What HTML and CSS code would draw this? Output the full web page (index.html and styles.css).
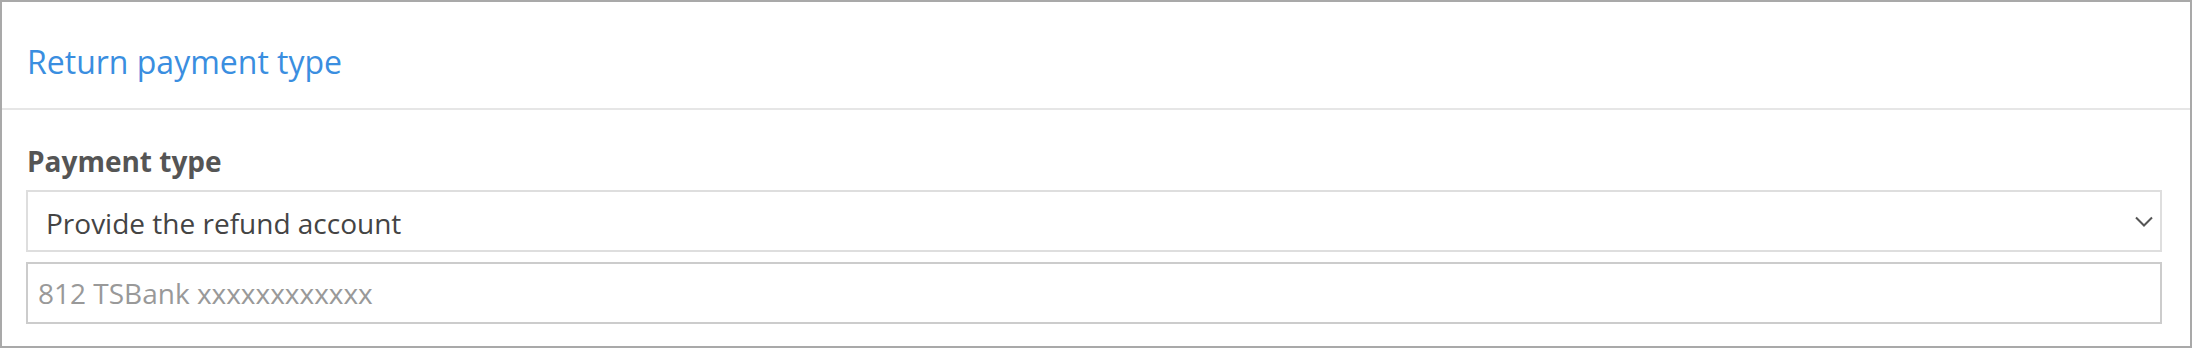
FILE: index.html
```html
<!DOCTYPE html>
<html lang="en">
<head>
<meta charset="utf-8">
<title>Return payment type</title>
<link rel="stylesheet" href="styles.css">
</head>
<body>
<section class="panel">
  <header class="panel-header">
    <h2 class="panel-title">Return payment type</h2>
  </header>
  <div class="panel-body">
    <div class="field-label">Payment type</div>
    <div class="select">
      <span class="select-value">Provide the refund account</span>
      <svg class="chevron" width="18" height="11" viewBox="0 0 18 11" aria-hidden="true">
        <polyline points="1,1.5 9,9.5 17,1.5" fill="none" stroke="#555" stroke-width="2"/>
      </svg>
    </div>
    <div class="input">
      <span class="placeholder">812 TSBank xxxxxxxxxxxx</span>
    </div>
  </div>
</section>
</body>
</html>
```

FILE: styles.css
```css
html, body {
  margin: 0;
  padding: 0;
  background: #fff;
}

body {
  font-family: "Open Sans", "Liberation Sans", sans-serif;
}

.panel {
  box-sizing: border-box;
  width: 2192px;
  height: 348px;
  border: 2px solid #a9a9a9;
  background: #fff;
}

.panel-header {
  box-sizing: border-box;
  height: 108px;
  padding: 38px 0 0 25px;
  border-bottom: 2px solid #e6e6e6;
}

.panel-title {
  margin: 0;
  font-size: 32px;
  line-height: 44px;
  font-weight: 400;
  color: #3a8ee0;
}

.panel-body {
  padding: 32px 28px 0 24px;
  display: flex;
  flex-direction: column;
}

.field-label {
  font-size: 28px;
  font-weight: 700;
  line-height: 38px;
  color: #555;
  margin-bottom: 10px;
  padding-left: 1px;
}

.select,
.input {
  box-sizing: border-box;
  height: 62px;
  display: flex;
  align-items: center;
  font-size: 28px;
  line-height: 38px;
}

.select {
  border: 2px solid #dedede;
  padding: 4px 7px 0 18px;
  justify-content: space-between;
  color: #444;
  margin-bottom: 10px;
}

.chevron {
  display: block;
  margin-top: -4px;
}

.input {
  border: 2px solid #cccccc;
  padding: 0 0 0 10px;
  color: #999;
}
```
